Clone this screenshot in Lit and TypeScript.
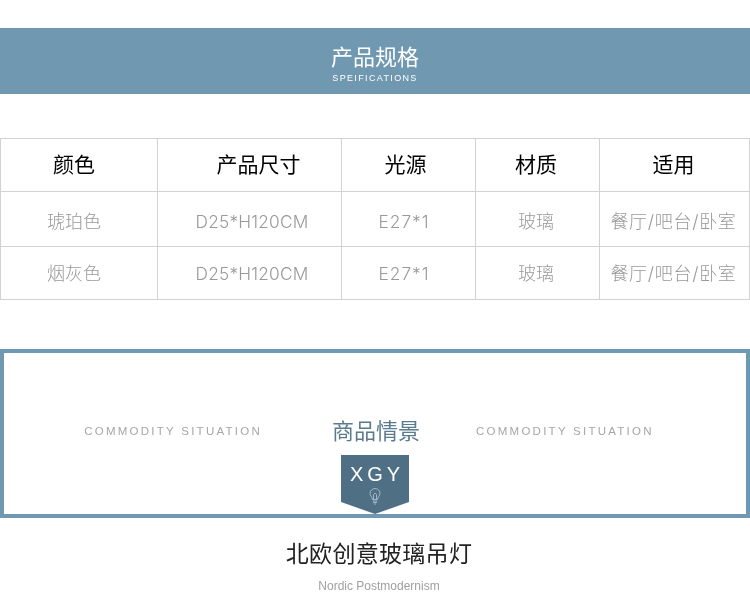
import { LitElement, html, css } from "lit";
import { customElement } from "lit/decorators.js";

const headers = ["颜色", "产品尺寸", "光源", "材质", "适用"];
const rows = [
  ["琥珀色", "D25*H120CM", "E27*1", "玻璃", "餐厅/吧台/卧室"],
  ["烟灰色", "D25*H120CM", "E27*1", "玻璃", "餐厅/吧台/卧室"],
];

@customElement("app-root")
export class AppRoot extends LitElement {
  static styles = css`
    :host { display: block; width: 750px; height: 600px; overflow: hidden; font-family: "Noto Sans CJK SC", "Liberation Sans", sans-serif; will-change: transform; }
    .banner { margin-top: 28px; height: 66px; background: #7098b0; color: #fff; display: flex; flex-direction: column; align-items: center; }
    .banner h1 { margin: 11px 0 0; font-size: 22px; line-height: 32px; font-weight: 400; }
    .banner p { margin: 1px 0 0; font: 400 9px/12px "Liberation Sans", sans-serif; letter-spacing: 1.35px; color: #fff; }
    .table { margin-top: 44px; display: grid; grid-template-columns: 157px 184px 134px 124px 150px; grid-template-rows: 53px 55px 53px; border-top: 1px solid #d2d2d2; border-left: 1px solid #d2d2d2; width: 750px; box-sizing: border-box; }
    .cell { border-right: 1px solid #d2d2d2; border-bottom: 1px solid #d2d2d2; display: flex; align-items: center; justify-content: center; font-family: Inter, "Noto Sans CJK SC", sans-serif; font-size: 18px; font-weight: 300; color: #999; white-space: nowrap; box-sizing: border-box; }
    .cell.latin { font-size: 17.3px; letter-spacing: 0.2px; }
    .r0 { padding-top: 2px; }
    .r1 { padding-bottom: 2px; }
    .r0.latin { padding-top: 5px; }
    .r1.latin { padding-top: 0; padding-bottom: 0; }
    .c0 { padding-right: 10px; }
    .c2 { padding-right: 9px; }
    .cell.latin.c2 { letter-spacing: 1px; }
    .c3 { padding-right: 3px; }
    .c4 { padding-right: 2px; letter-spacing: 0.7px; }
    .cell.head { font-size: 21px; font-weight: 400; color: #000; padding-bottom: 4px; letter-spacing: 0; }
    .head.c1 { padding-left: 18px; }
    .head.c2 { padding-right: 6px; }
    .c1:not(.head) { padding-left: 5px; }
    .frame { margin-top: 49px; height: 169px; box-sizing: border-box; border: 4px solid #7098b0; display: flex; flex-direction: column; align-items: center; padding-top: 60px; }
    .title-row { display: flex; align-items: center; justify-content: center; width: 742px; padding-right: 12px; box-sizing: border-box; }
    .en { font: 400 11.5px/16px "Liberation Sans", sans-serif; letter-spacing: 2.25px; color: #a6a6a6; white-space: nowrap; padding-top: 3px; }
    .title-row h2 { margin: 0 56px 0 70px; font-size: 22px; line-height: 32px; font-weight: 400; color: #5b7b91; }
    .badge { margin-top: 10px; width: 68px; height: 59px; background: #4f6f85; clip-path: polygon(0 0, 100% 0, 100% 47px, 50% 59px, 0 47px); color: #fff; display: flex; flex-direction: column; align-items: center; }
    .badge b { font: 400 20px/22px "Liberation Sans", sans-serif; letter-spacing: 4px; margin: 8px 0 0 4px; }
    .badge svg { display: block; margin-top: 3px; }
    .foot { text-align: center; }
    .foot h3 { margin: 18px 0 0; padding-left: 8px; font-size: 23px; line-height: 32px; font-weight: 400; letter-spacing: 0.3px; color: #222; }
    .foot p { margin: 11px 0 0; font: 400 12px/14px "Liberation Sans", sans-serif; color: #a0a0a0; padding-left: 8px; }
  `;
  render() {
    return html`
      <div class="banner"><h1>产品规格</h1><p>SPEIFICATIONS</p></div>
      <div class="table">
        ${headers.map((h, i) => html`<div class="cell head c${i}">${h}</div>`)}
        ${rows.map((r, ri) => r.map((c, i) => html`<div class="cell r${ri} c${i} ${i === 1 || i === 2 ? "latin" : ""}">${c}</div>`))}
      </div>
      <div class="frame">
        <div class="title-row">
          <span class="en">COMMODITY SITUATION</span>
          <h2>商品情景</h2>
          <span class="en">COMMODITY SITUATION</span>
        </div>
        <div class="badge">
          <b>XGY</b>
          <svg width="12" height="17" viewBox="0 0 12 17" fill="none" stroke="#c3d1db" stroke-width="0.7">
            <path d="M3.5 11.5C3.3 9 1 8 1 5.5a5 5 0 0 1 10 0C11 8 8.7 9 8.5 11.5z"/>
            <path d="M4.5 11V6.5L6 5l1.5 1.5V11"/>
            <path d="M3.8 13h4.4M4 14.5h4M5 16h2"/>
          </svg>
        </div>
      </div>
      <div class="foot">
        <h3>北欧创意玻璃吊灯</h3>
        <p>Nordic Postmodernism</p>
      </div>
    `;
  }
}
